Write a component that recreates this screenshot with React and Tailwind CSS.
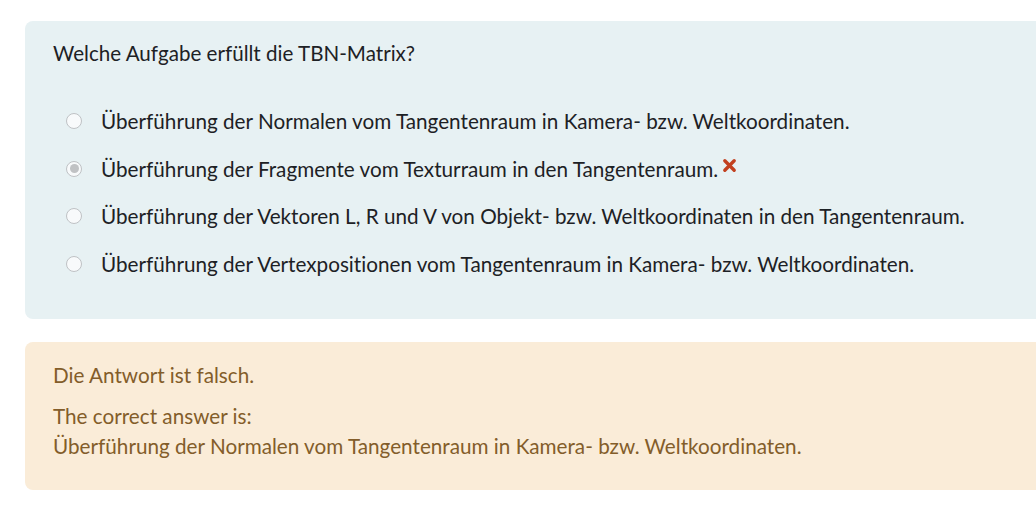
export default function App() {
  const opts = [
    "Überführung der Normalen vom Tangentenraum in Kamera- bzw. Weltkoordinaten.",
    "Überführung der Fragmente vom Texturraum in den Tangentenraum.",
    "Überführung der Vektoren L, R und V von Objekt- bzw. Weltkoordinaten in den Tangentenraum.",
    "Überführung der Vertexpositionen vom Tangentenraum in Kamera- bzw. Weltkoordinaten.",
  ];
  return (
    <div className="w-[1036px] h-[505px] overflow-hidden bg-white [font-variant-ligatures:none]" style={{ fontFamily: "Lato, 'Noto Sans', sans-serif" }}>
      <div className="pl-[25px] pt-[21px] w-[1080px]">
        <div className="bg-[#e7f1f3] rounded-[8px] h-[298px] pl-[28px] pt-[17px]">
          <div className="text-[20.6px] leading-[30px] text-[#1d2125]">Welche Aufgabe erfüllt die TBN-Matrix?</div>
          <div className="mt-[38px] flex flex-col gap-[17.5px]">
            {opts.map((t, i) => (
              <div key={i} className="flex items-center h-[30px] pl-[13px]">
                <span className="w-[16px] h-[16px] rounded-full border border-[#bfc2c5] bg-[#f8fafb] flex items-center justify-center shrink-0">
                  {i === 1 && <span className="w-[9px] h-[9px] rounded-full bg-[#c0c2c4]" />}
                </span>
                <span className="ml-[19px] text-[20.7px] leading-[30px] text-[#1d2125] whitespace-nowrap">{t}</span>
                {i === 1 && (
                  <svg className="ml-[4px] -mt-[6px]" width="15" height="15" viewBox="0 0 16 16">
                    <path d="M3 3 L13 13 M13 3 L3 13" stroke="#c2401f" strokeWidth="3.6" strokeLinecap="round" />
                  </svg>
                )}
              </div>
            ))}
          </div>
        </div>
        <div className="mt-[23px] bg-[#faecd8] rounded-[8px] h-[148px] pl-[28px] pt-[18px] text-[#835d2a] text-[20.7px] leading-[30px]">
          <div>Die Antwort ist falsch.</div>
          <div className="mt-[11px]">The correct answer is:</div>
          <div>Überführung der Normalen vom Tangentenraum in Kamera- bzw. Weltkoordinaten.</div>
        </div>
      </div>
    </div>
  );
}
